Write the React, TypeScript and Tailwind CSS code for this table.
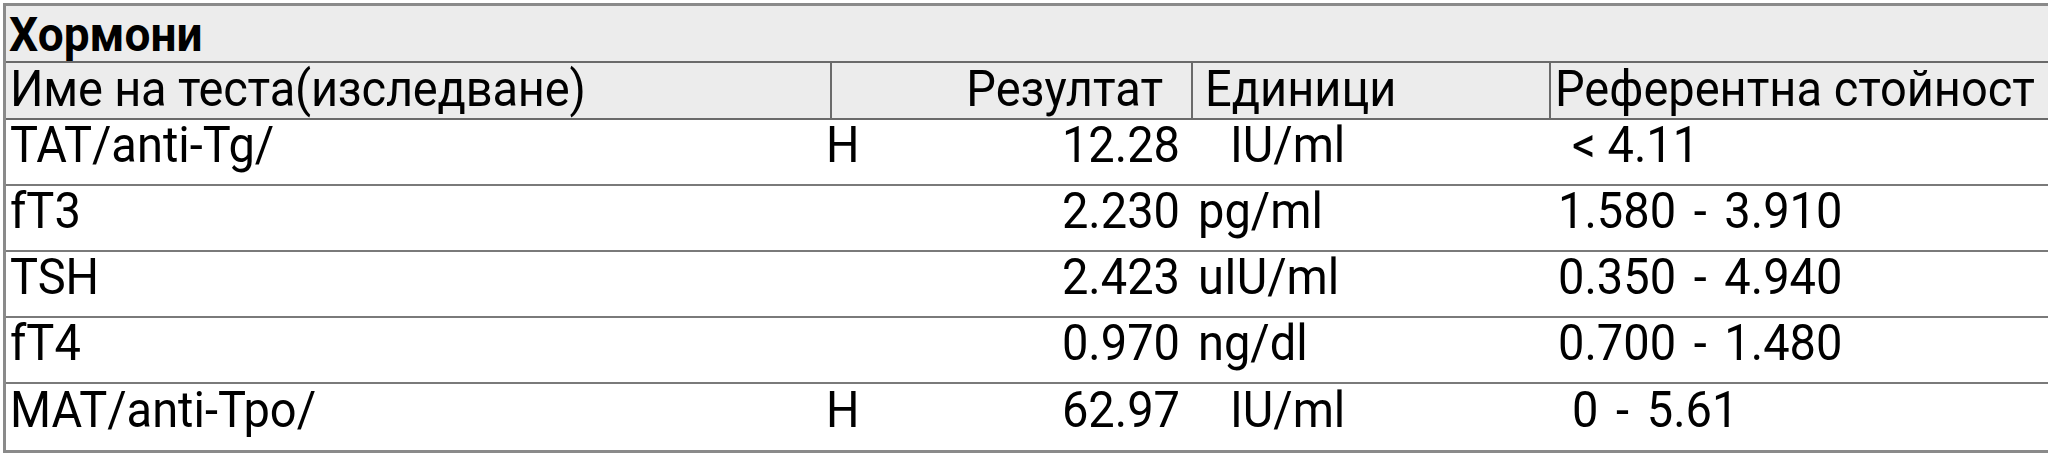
import React from "react";

const rows = [
  { name: "TAT/anti-Tg/", flag: "H", value: "12.28", unit: "IU/ml", wide: true, ref: "< 4.11", refCls: "pl-[20px]" },
  { name: "fT3", flag: "", value: "2.230", unit: "pg/ml", wide: false, ref: "1.580 - 3.910", refCls: "pl-[6px] [word-spacing:6px]" },
  { name: "TSH", flag: "", value: "2.423", unit: "uIU/ml", wide: false, ref: "0.350 - 4.940", refCls: "pl-[6px] [word-spacing:6px]" },
  { name: "fT4", flag: "", value: "0.970", unit: "ng/dl", wide: false, ref: "0.700 - 1.480", refCls: "pl-[6px] [word-spacing:6px]" },
  { name: "MAT/anti-Tpo/", flag: "H", value: "62.97", unit: "IU/ml", wide: true, ref: "0 - 5.61", refCls: "pl-[20px] [word-spacing:6px]" },
];

function T({ children }: { children: React.ReactNode }) {
  return <span className="inline-block scale-y-[1.06]">{children}</span>;
}

export default function App() {
  return (
    <div className="w-[2048px] h-[455px] overflow-hidden bg-white font-['Roboto',sans-serif] text-black">
      <div className="ml-[3px] mt-[3px] w-[2100px] border-t-[3px] border-l-[3px] border-b-[3px] border-[#8a8a8a]">
        <div className="h-[57px] bg-[#ececec] border-b-2 border-[#6a6a6a] flex items-center pl-[3px] text-[46px] font-bold leading-none">
          <T>Хормони</T>
        </div>
        <div className="h-[57px] bg-[#ececec] border-b-2 border-[#6a6a6a] flex text-[47px] leading-none whitespace-pre">
          <div className="w-[824px] flex items-center pl-[4px] pb-[5px] tracking-[-0.2px]"><T>Име на теста(изследване)</T></div>
          <div className="w-[361px] border-l-2 border-[#6a6a6a] flex items-center justify-end pr-[28px] pb-[5px]"><T>Резултат</T></div>
          <div className="w-[358px] border-l-2 border-[#6a6a6a] flex items-center pl-[12px] pb-[5px]"><T>Единици</T></div>
          <div className="flex-1 border-l-2 border-[#6a6a6a] flex items-center pl-[4px] pb-[5px]"><T>Референтна стойност</T></div>
        </div>
        {rows.map((r, i) => (
          <div
            key={r.name}
            className={`h-[66px] flex text-[47px] leading-none whitespace-pre ${i < rows.length - 1 ? "border-b-2 border-[#7a7a7a]" : ""}`}
          >
            <div className="w-[820px] flex items-center pl-[4px] pb-[15px]"><T>{r.name}</T></div>
            <div className="w-[126px] flex items-center pb-[15px]"><T>{r.flag}</T></div>
            <div className="w-[228px] flex items-center justify-end pb-[15px]"><T>{r.value}</T></div>
            <div className={`w-[372px] flex items-center pb-[15px] ${r.wide ? "pl-[50px]" : "pl-[18px]"}`}><T>{r.unit}</T></div>
            <div className={`flex-1 flex items-center pb-[15px] ${r.refCls}`}><T>{r.ref}</T></div>
          </div>
        ))}
      </div>
    </div>
  );
}
